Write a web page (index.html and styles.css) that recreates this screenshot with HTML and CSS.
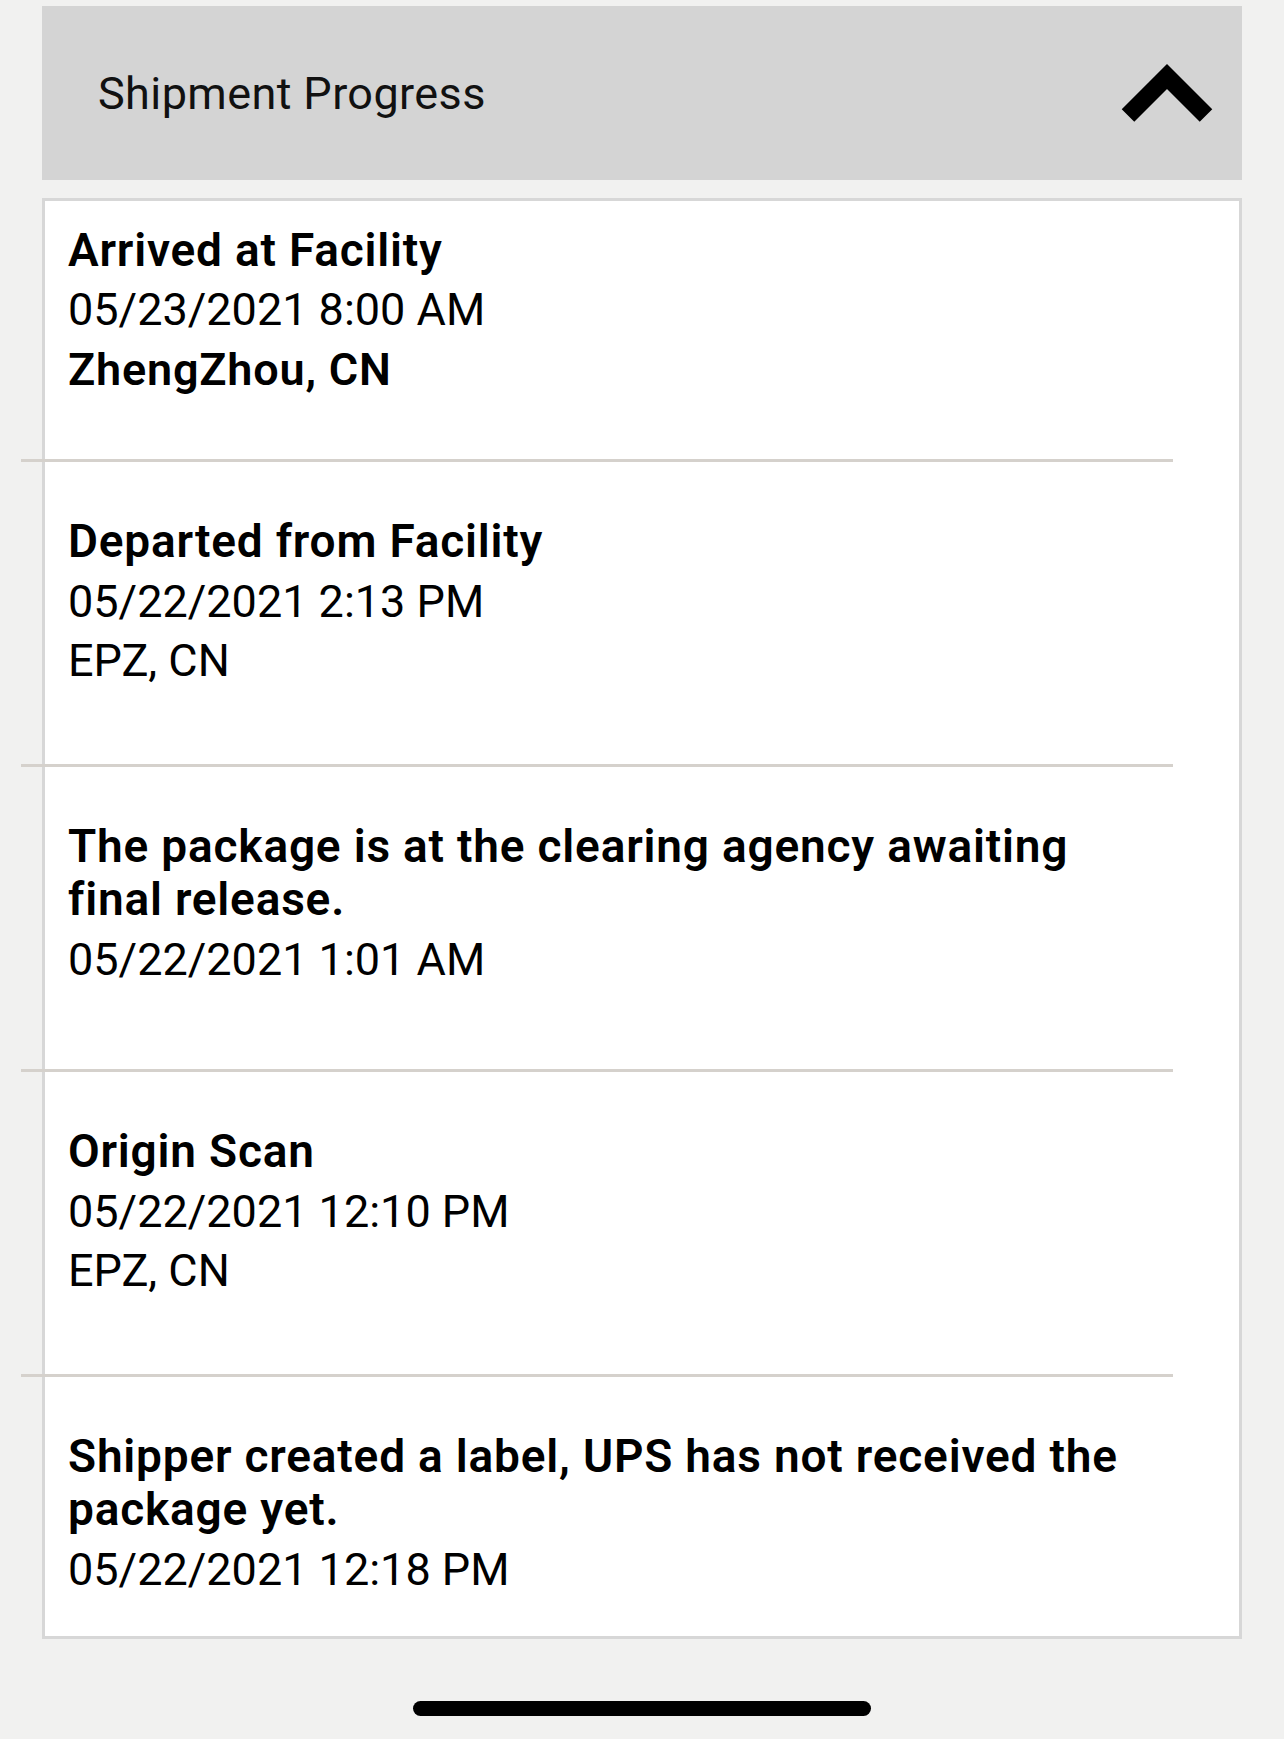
FILE: index.html
```html
<!DOCTYPE html>
<html lang="en">
<head>
<meta charset="utf-8">
<title>Shipment Progress</title>
<link rel="stylesheet" href="styles.css">
</head>
<body>
<div class="page">
  <div class="panel-header">
    <span class="panel-title">Shipment Progress</span>
    <svg class="chevron" width="96" height="64" viewBox="0 0 96 64" aria-hidden="true">
      <polyline points="9,54.5 48,15.5 87,54.5" fill="none" stroke="#000" stroke-width="17.7" stroke-linejoin="miter" stroke-linecap="butt"/>
    </svg>
  </div>

  <div class="card">
    <div class="event">
      <div class="ev-title">Arrived at Facility</div>
      <div class="ev-meta">05/23/2021 8:00 AM</div>
      <div class="ev-meta ev-strong">ZhengZhou, CN</div>
    </div>
    <div class="sep"></div>
    <div class="event">
      <div class="ev-title">Departed from Facility</div>
      <div class="ev-meta">05/22/2021 2:13 PM</div>
      <div class="ev-meta">EPZ, CN</div>
    </div>
    <div class="sep"></div>
    <div class="event">
      <div class="ev-title">The package is at the clearing agency awaiting final release.</div>
      <div class="ev-meta">05/22/2021 1:01 AM</div>
    </div>
    <div class="sep"></div>
    <div class="event">
      <div class="ev-title">Origin Scan</div>
      <div class="ev-meta">05/22/2021 12:10 PM</div>
      <div class="ev-meta">EPZ, CN</div>
    </div>
    <div class="sep"></div>
    <div class="event">
      <div class="ev-title">Shipper created a label, UPS has not received the package yet.</div>
      <div class="ev-meta">05/22/2021 12:18 PM</div>
    </div>
  </div>

  <div class="home-bar-wrap"><div class="home-bar"></div></div>
</div>
</body>
</html>
```

FILE: styles.css
```css
html, body {
  margin: 0;
  padding: 0;
  background: #f1f1f0;
}

body {
  font-family: Roboto, "Liberation Sans", Arial, sans-serif;
  color: #000;
}

.page {
  padding: 6px 42px 0 42px;
}

.panel-header {
  height: 174px;
  background: #d4d4d4;
  display: flex;
  align-items: center;
  justify-content: space-between;
  padding: 0 27px 0 56px;
  box-sizing: border-box;
}

.panel-title {
  font-size: 45px;
  font-weight: 400;
  letter-spacing: 0.4px;
  color: #111;
}

.chevron {
  display: block;
  margin-top: -1px;
}

.card {
  margin-top: 18px;
  background: #fff;
  border: 3px solid #d7d7d7;
}

.event {
  box-sizing: border-box;
  min-height: 302px;
  padding: 53px 24px 40px 23px;
}

.event:first-child {
  padding-top: 22.5px;
  min-height: 258px;
}

.event:last-child {
  min-height: 0;
}

.ev-title {
  font-size: 46px;
  font-weight: 600;
  line-height: 53px;
  letter-spacing: 0.8px;
  max-width: 1075px;
}

.ev-meta {
  font-size: 45px;
  font-weight: 400;
  line-height: 53px;
  margin-top: 6.5px;
}

.ev-strong {
  font-weight: 600;
  letter-spacing: 0.8px;
}

.sep {
  height: 3px;
  background: #d5d1cc;
  margin-left: -24px;
  width: 1152px;
}

.home-bar-wrap {
  display: flex;
  justify-content: center;
  padding-top: 62px;
}

.home-bar {
  width: 458px;
  height: 15px;
  border-radius: 8px;
  background: #000;
}
```
